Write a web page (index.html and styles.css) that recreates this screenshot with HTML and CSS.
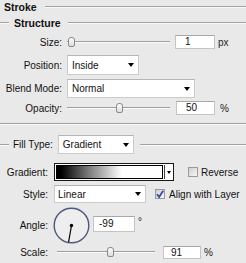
FILE: index.html
```html
<!DOCTYPE html>
<html lang="en">
<head>
    <meta charset="UTF-8">
    <meta name="viewport" content="width=device-width, initial-scale=1.0">
    <title>Stroke</title>
    <link rel="stylesheet" href="styles.css">
</head>
<body>
    <div class="panel">
        <!-- 标题 -->
        <div class="legend head"><span class="legend-title">Stroke</span></div>
        <div class="legend sub"><span class="legend-title">Structure</span></div>

        <div class="row row-size">
            <span class="lbl">Size:</span>
            <div class="slider"><span class="thumb" style="left:1px"></span></div>
            <div class="field field-top">1</div>
            <span class="unit">px</span>
        </div>
        <div class="row row-pos">
            <span class="lbl">Position:</span>
            <div class="select sel-pos"><span>Inside</span><i class="arrow"></i></div>
        </div>
        <div class="row row-blend">
            <span class="lbl">Blend Mode:</span>
            <div class="select sel-blend"><span>Normal</span><i class="arrow"></i></div>
        </div>
        <div class="row row-opacity">
            <span class="lbl">Opacity:</span>
            <div class="slider"><span class="thumb" style="left:49px"></span></div>
            <div class="field field-top field-op">50</div>
            <span class="unit unit-pct">%</span>
        </div>

        <div class="sep"></div>

        <!-- 填充类型 -->
        <div class="legend fill">
            <span class="fill-title">Fill Type:</span>
            <div class="select sel-fill"><span>Gradient</span><i class="arrow"></i></div>
        </div>

        <div class="row row-grad">
            <span class="lbl lbl-s">Gradient:</span>
            <div class="grad-box">
                <div class="grad-swatch"></div>
                <div class="grad-btn"><i class="arrow arrow-sm"></i></div>
            </div>
            <span class="check check-rev"></span>
            <span class="check-text">Reverse</span>
        </div>
        <div class="row row-style">
            <span class="lbl lbl-s">Style:</span>
            <div class="select sel-style"><span>Linear</span><i class="arrow"></i></div>
            <span class="check check-align">
                <svg width="10" height="10" viewBox="0 0 10 10"><path d="M2 5.2 L4.1 8 L8.2 1.8" fill="none" stroke="#34479e" stroke-width="1.7"/></svg>
            </span>
            <span class="check-text">Align with Layer</span>
        </div>
        <div class="row row-angle">
            <span class="lbl lbl-s lbl-angle">Angle:</span>
            <svg class="dial" width="37" height="37" viewBox="0 0 37 37">
                <circle cx="18.5" cy="18.5" r="17.3" fill="#eeeeee" stroke="#4d587a" stroke-width="1.4"/>
                <line x1="18.5" y1="18.5" x2="15.6" y2="35" stroke="#000" stroke-width="1.2"/>
                <circle cx="18.5" cy="18.5" r="1.7" fill="#000"/>
            </svg>
            <div class="field field-angle">-99</div>
            <span class="deg">°</span>
        </div>
        <div class="row row-scale">
            <span class="lbl lbl-s lbl-scale">Scale:</span>
            <div class="slider slider-scale"><span class="thumb" style="left:50px"></span></div>
            <div class="field field-scale">91</div>
            <span class="unit">%</span>
        </div>
    </div>
</body>
</html>
```

FILE: styles.css
```css
* {
    margin: 0;
    padding: 0;
    box-sizing: border-box;
}
body {
    background: #e9e9e9;
    font-family: "Liberation Sans", Arial, sans-serif;
    font-size: 10px;
    color: #111;
}
.panel {
    width: 246px;
    height: 263px;
    overflow: hidden;
}
/* 分组标题线 */
.legend {
    display: flex;
    align-items: center;
    height: 14px;
}
.legend::after {
    content: "";
    flex: 1;
    border-top: 1px solid #a2a2a2;
    border-bottom: 1px solid #fafafa;
}
.legend-title {
    font-weight: bold;
    font-size: 10.5px;
}
.head {
    padding-left: 4px;
}
.head .legend-title {
    margin-right: 8px;
}
.sub {
    margin-top: 2px;
}
.sub::before,
.fill::before {
    content: "";
    width: 9px;
    border-top: 1px solid #a2a2a2;
    border-bottom: 1px solid #fafafa;
    margin-right: 5px;
}
.sub .legend-title {
    margin-right: 7px;
}
.row {
    display: flex;
    align-items: center;
}
.lbl {
    width: 62px;
    margin-right: 5px;
    text-align: right;
    flex-shrink: 0;
}
.lbl-s {
    width: 48px;
    margin-right: 6px;
}
/* 滑块 */
.slider {
    position: relative;
    width: 103px;
    height: 14px;
}
.slider::before {
    content: "";
    position: absolute;
    left: 0;
    right: 0;
    top: 6px;
    border-top: 1px solid #9c9c9c;
    border-bottom: 1px solid #fbfbfb;
}
.thumb {
    position: absolute;
    top: 2px;
    width: 7px;
    height: 10px;
    border: 1px solid #8a8a8a;
    border-radius: 3px 3px 2px 2px;
    background: linear-gradient(#fdfdfd, #dcdcdc);
}
.field {
    height: 14px;
    background: #fff;
    border: 1px solid #c4c4c4;
    border-top-color: #a8a8a8;
    line-height: 12px;
    padding-left: 9px;
}
.field-top {
    width: 40px;
    margin-left: 5px;
}
.field-op {
    width: 39px;
    margin-left: 6px;
}
.unit {
    margin-left: 3px;
    color: #222;
}
.unit-pct {
    margin-left: 5px;
}
/* 下拉框 */
.select {
    display: flex;
    align-items: center;
    background: #fff;
    border: 1px solid #cbcbcb;
    border-top-color: #b5b5b5;
    padding: 0 4px;
}
.arrow {
    margin-left: auto;
    width: 0;
    height: 0;
    border-left: 3.5px solid transparent;
    border-right: 3.5px solid transparent;
    border-top: 4px solid #000;
}
.arrow-sm {
    margin: 0 auto;
    border-left-width: 2.5px;
    border-right-width: 2.5px;
    border-top-width: 3px;
}
.row-size {
    margin-top: 5px;
    height: 14px;
}
.row-pos {
    margin-top: 6px;
}
.sel-pos {
    width: 72px;
    height: 20px;
}
.row-blend {
    margin-top: 4px;
}
.sel-blend {
    width: 128px;
    height: 19px;
}
.row-opacity {
    margin-top: 3px;
    height: 14px;
}
.sep {
    margin-top: 8px;
    border-top: 1px solid #a2a2a2;
    border-bottom: 1px solid #fafafa;
}
.fill {
    margin-top: 10px;
    height: 19px;
}
.fill::before {
    margin-right: 4px;
}
.fill::after {
    margin-left: 6px;
}
.sel-fill {
    width: 76px;
    height: 19px;
    margin-left: 5px;
}
/* 渐变 */
.row-grad {
    margin-top: 9px;
    height: 18px;
}
.grad-box {
    display: flex;
    width: 120px;
    height: 18px;
    border: 1px solid #1a1a1a;
    background: #fff;
    padding: 1px 0 1px 1px;
}
.grad-swatch {
    flex: 1;
    border: 1px solid #000;
    background: linear-gradient(to right, #000 4%, #7a7a7a 30%, #fff 62%);
}
.grad-btn {
    width: 9px;
    margin-left: 1px;
    border-left: 1px solid #444;
    display: flex;
    align-items: center;
}
.check {
    width: 10px;
    height: 10px;
    border: 1px solid #9a9a9a;
    background: linear-gradient(135deg, #cfcfcf, #f7f7f7);
    flex-shrink: 0;
}
.check svg {
    display: block;
    margin: -1px 0 0 -1px;
}
.check-rev {
    margin-left: 14px;
}
.check-text {
    margin-left: 3px;
}
.row-style {
    margin-top: 4px;
}
.sel-style {
    width: 92px;
    height: 18px;
    padding-left: 3px;
}
.check-align {
    margin-left: 9px;
}
.check-align + .check-text {
    margin-left: 4px;
}
.row-angle {
    margin-top: 4px;
    height: 37px;
}
.lbl-angle {
    margin-right: 5px;
}
.dial {
    display: block;
    flex-shrink: 0;
}
.field-angle {
    width: 42px;
    height: 16px;
    margin-left: 3px;
    margin-top: -4px;
    padding-left: 5px;
    line-height: 14px;
}
.deg {
    align-self: flex-start;
    margin-top: 9px;
    margin-left: 3px;
}
.row-scale {
    margin-top: 2px;
    height: 13px;
}
.lbl-scale {
    margin-right: 9px;
}
.slider-scale {
    width: 98px;
    height: 13px;
}
.slider-scale .thumb {
    top: 1px;
}
.slider-scale::before {
    top: 5px;
}
.field-scale {
    width: 38px;
    height: 13px;
    margin-left: 8px;
    padding-left: 7px;
    line-height: 11px;
}
```
